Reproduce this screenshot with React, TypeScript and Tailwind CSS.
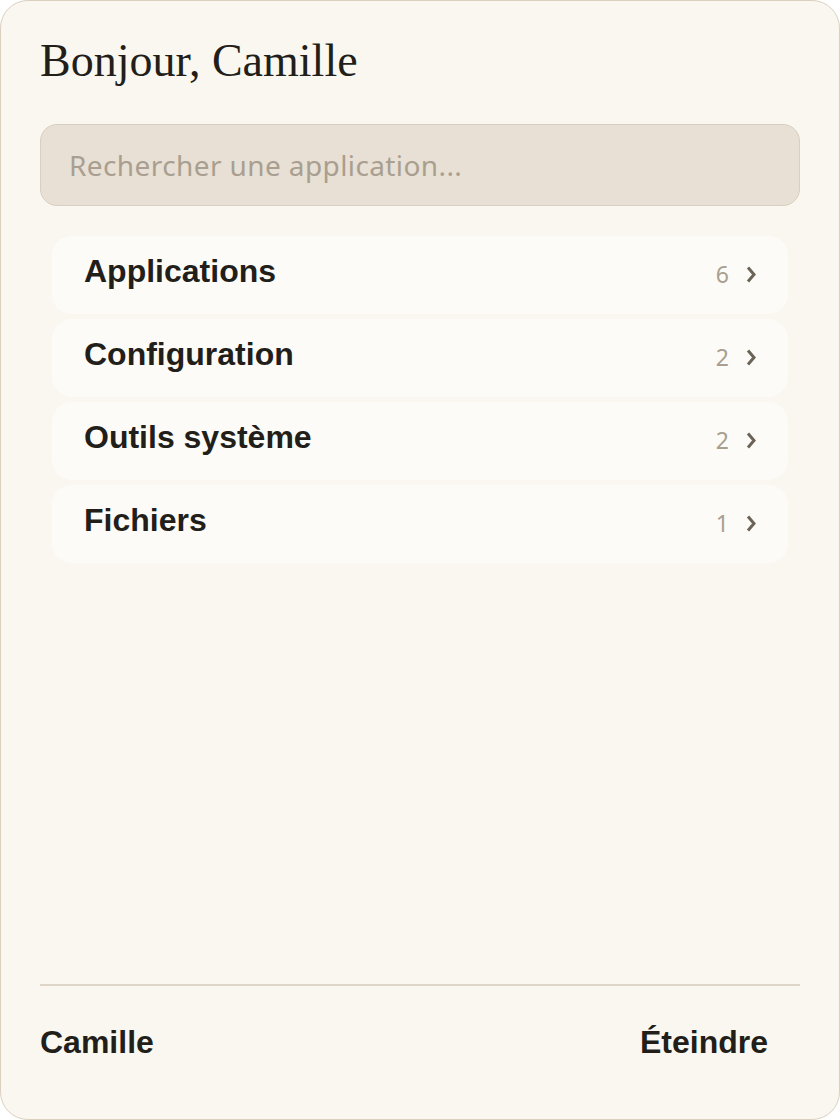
import React from "react";

const items = [
  { label: "Applications", count: 6 },
  { label: "Configuration", count: 2 },
  { label: "Outils système", count: 2 },
  { label: "Fichiers", count: 1 },
];

function Chevron() {
  return (
    <svg width="10" height="17" viewBox="0 0 10 17" fill="none" className="block">
      <path d="M2 1.5 L8 8.5 L2 15.5" stroke="#6b6358" strokeWidth="3" strokeLinecap="butt" strokeLinejoin="miter" />
    </svg>
  );
}

export default function App() {
  return (
    <div className="w-[840px] h-[1120px] bg-white">
      <div className="box-border w-[840px] h-[1120px] border border-[#d9d0bf] rounded-[28px] bg-[#faf7f0] px-[39px] pt-[37px] flex flex-col">
        <h1
          className="h-[46px] text-[46px] leading-none text-[#221e1a] font-normal"
          style={{ fontFamily: '"Liberation Serif", "DejaVu Serif", serif' }}
        >
          Bonjour, Camille
        </h1>

        <div className="mt-10 h-[82px] box-border rounded-[17px] border border-[#d8cfc0] bg-[#e8e0d4] flex items-center pl-[28px]">
          <span
            className="text-[28px] leading-none text-[#a89f90] tracking-[0.4px]"
            style={{ fontFamily: '"Noto Sans", "Open Sans", sans-serif' }}
          >
            Rechercher une application...
          </span>
        </div>

        <div className="mt-[30px] mx-3 flex flex-col gap-[5px]">
          {items.map((it) => (
            <div
              key={it.label}
              className="h-[78px] rounded-[20px] bg-[#fcfbf7] flex items-start justify-between pl-8 pr-8 pt-[19px]"
            >
              <span
                className="text-[32px] leading-none font-bold text-[#221e1a]"
                style={{ fontFamily: '"Liberation Sans", Arial, sans-serif' }}
              >
                {it.label}
              </span>
              <div className="h-[32px] mt-[3px] flex items-center gap-[17px]">
                <span
                  className="text-[23px] leading-none text-[#a89f90]"
                  style={{ fontFamily: '"Noto Sans", "Open Sans", sans-serif' }}
                >
                  {it.count}
                </span>
                <Chevron />
              </div>
            </div>
          ))}
        </div>

        <div className="flex-1" />

        <div className="h-[2px] bg-[#ddd5c8]" />

        <div
          className="pt-[40px] pb-[61px] flex justify-between text-[32px] leading-none font-bold text-[#221e1a]"
          style={{ fontFamily: '"Liberation Sans", Arial, sans-serif' }}
        >
          <span className="h-[32px]">Camille</span>
          <span className="h-[32px] pr-8">Éteindre</span>
        </div>
      </div>
    </div>
  );
}
